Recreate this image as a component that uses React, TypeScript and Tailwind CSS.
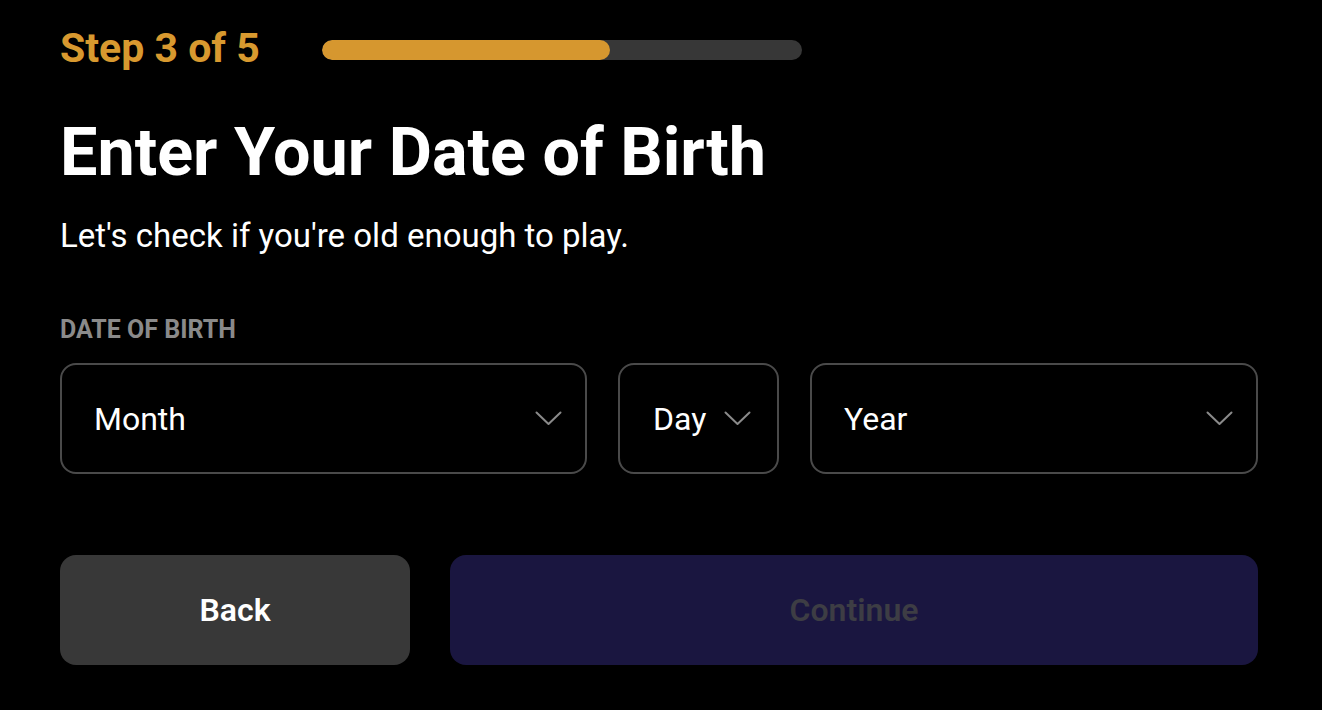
const font = { fontFamily: "Roboto, 'Liberation Sans', sans-serif" };

function Chevron() {
  return (
    <svg width="27" height="15" viewBox="0 0 27 15" fill="none" className="shrink-0">
      <polyline
        points="1.5,1.5 13.5,13 25.5,1.5"
        stroke="#8a8a8a"
        strokeWidth="2"
        strokeLinecap="round"
        strokeLinejoin="round"
      />
    </svg>
  );
}

function Select({ label, className }: { label: string; className: string }) {
  return (
    <div
      className={`flex h-[111px] items-center justify-between rounded-[16px] border-2 border-[#4a4a4a] pl-[32px] pr-[23px] ${className}`}
    >
      <span className="text-[32px] leading-none text-white">{label}</span>
      <Chevron />
    </div>
  );
}

export default function App() {
  return (
    <div
      className="min-h-screen w-full bg-black pl-[60px] pt-[24px] antialiased"
      style={font}
    >
      <div className="flex w-[1198px] flex-col">
        <div className="flex items-center gap-[62px]">
          <span className="text-[41px] font-bold leading-[48px] text-[#d8992f]">
            Step 3 of 5
          </span>
          <div className="mt-[4px] h-[20px] w-[480px] overflow-hidden rounded-full bg-[#373737]">
            <div className="h-full w-[60%] rounded-full bg-[#d6972f]" />
          </div>
        </div>

        <h1 className="mt-[42px] text-[66.5px] font-bold leading-[77px] text-white">
          Enter Your Date of Birth
        </h1>
        <p className="mt-[26px] text-[33px] leading-[38px] text-white">
          Let's check if you're old enough to play.
        </p>

        <div className="mt-[61px] text-[25px] font-bold leading-[28px] text-[#8a8a8a]">
          DATE OF BIRTH
        </div>
        <div className="mt-[19px] flex gap-[31px]">
          <Select label="Month" className="w-[527px]" />
          <div className="flex h-[111px] w-[161px] items-center gap-[18px] rounded-[16px] border-2 border-[#4a4a4a] pl-[33px]">
            <span className="text-[32px] leading-none text-white">Day</span>
            <Chevron />
          </div>
          <Select label="Year" className="w-[448px]" />
        </div>

        <div className="mt-[81px] flex gap-[40px]">
          <button className="flex h-[110px] w-[350px] items-center justify-center rounded-[16px] bg-[#383838] text-[32px] font-semibold text-white">
            Back
          </button>
          <button className="flex h-[110px] flex-1 items-center justify-center rounded-[16px] bg-[#1a1640] text-[32px] font-semibold text-[#3d3d44]">
            Continue
          </button>
        </div>
      </div>
    </div>
  );
}
